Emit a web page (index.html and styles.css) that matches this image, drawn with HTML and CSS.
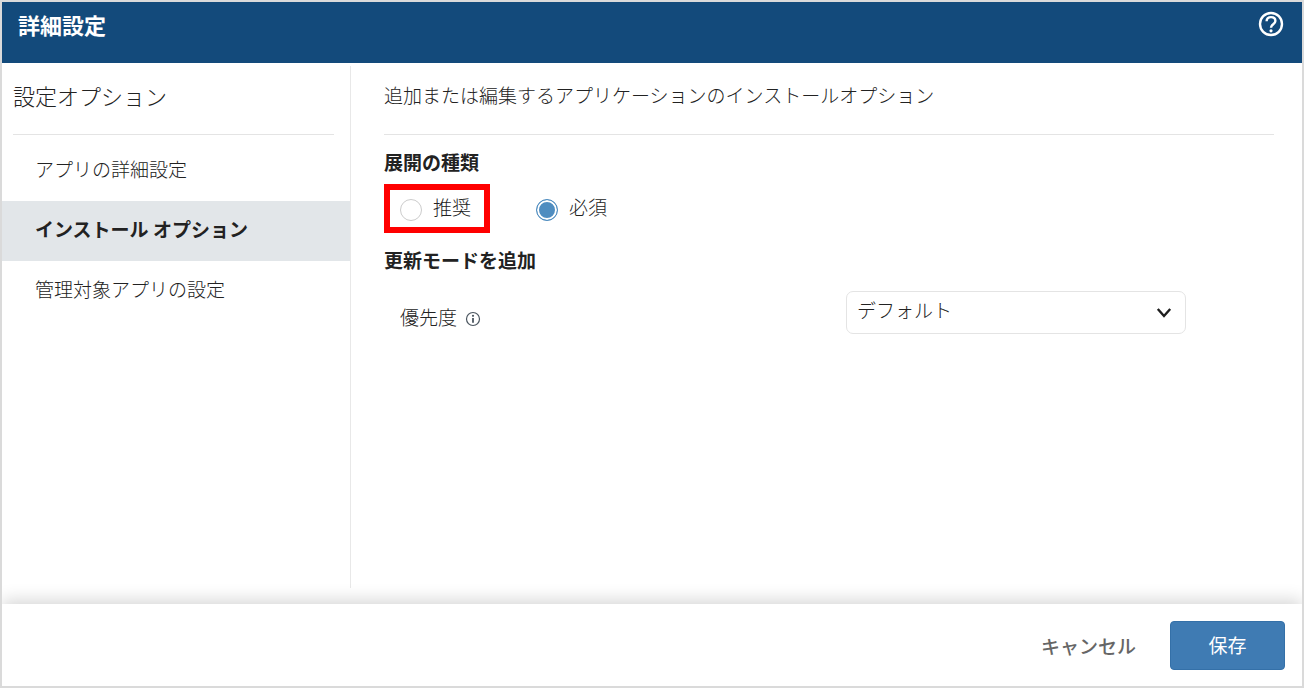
FILE: index.html
```
<!DOCTYPE html>
<html lang="ja">
<head>
  <meta charset="UTF-8">
  <meta name="viewport" content="width=device-width, initial-scale=1">
  <title>詳細設定</title>
  <link rel="stylesheet" href="styles.css">
</head>
<body>

<div class="dialog">
  <header class="dialog-header">
    <h1>詳細設定</h1>
    <button type="button" class="help" aria-label="ヘルプ">
      <svg width="26" height="26" viewBox="0 0 26 26" fill="none" stroke="#fff">
        <circle cx="13" cy="13" r="11" stroke-width="2.4"/>
        <path d="M8.6 10.2c0-2.5 1.8-4.1 4.4-4.1s4.4 1.6 4.4 3.9c0 3.2-4.4 3.4-4.4 6.8" stroke-width="2.4"/>
        <circle cx="13" cy="19.8" r="1.6" fill="#fff" stroke="none"/>
      </svg>
    </button>
  </header>

  <div class="dialog-body">
    <aside class="sidebar">
      <h2>設定オプション</h2>
      <nav>
        <ul>
          <li><a href="#details">アプリの詳細設定</a></li>
          <li><a href="#install" class="active">インストール オプション</a></li>
          <li><a href="#managed">管理対象アプリの設定</a></li>
        </ul>
      </nav>
    </aside>

    <main class="content">
      <p class="lead">追加または編集するアプリケーションのインストールオプション</p>

      <h3 id="deploy-title">展開の種類</h3>
      <div class="radios" role="radiogroup" aria-labelledby="deploy-title">
        <label class="radio highlight"><input type="radio" name="deploy"><span>推奨</span></label>
        <label class="radio"><input type="radio" name="deploy" checked><span>必須</span></label>
      </div>

      <h3>更新モードを追加</h3>
      <div class="field">
        <div class="field-label">
          <label for="priority">優先度</label>
          <svg width="16" height="16" viewBox="0 0 16 16" fill="none" stroke="#4a555f">
            <circle cx="8" cy="8" r="6.5" stroke-width="1.2"/>
            <path d="M8 7v4.8" stroke-width="1.8"/>
            <circle cx="8" cy="4.8" r="1.1" fill="#4a555f" stroke="none"/>
          </svg>
        </div>
        <div class="select">
          <select id="priority">
            <option>デフォルト</option>
          </select>
          <svg class="chevron" width="16" height="12" viewBox="0 0 16 12" fill="none" stroke="#1e1e1e" stroke-width="2.4">
            <path d="M1.8 2L8 9l6.2-7"/>
          </svg>
        </div>
      </div>
    </main>
  </div>

  <footer class="dialog-footer">
    <button type="button" class="btn-cancel">キャンセル</button>
    <button type="button" class="btn-save">保存</button>
  </footer>
</div>

</body>
</html>
```
FILE: styles.css
```
*, *:after, *:before {
  box-sizing: border-box;
}
body {
  background: #fff;
  color: #222;
  font-family: "Noto Sans CJK JP", sans-serif;
  font-size: 19px;
  font-weight: 300;
  line-height: 28px;
  margin: 0;
}
h1, h2, h3, p, ul {
  margin: 0;
  padding: 0;
}
ul {
  list-style: none;
}
button, select {
  font-family: inherit;
  font-size: inherit;
  line-height: inherit;
}
button {
  background: none;
  border: 0;
  cursor: pointer;
  padding: 0;
}
svg {
  display: block;
}

.dialog {
  border: 2px solid #dadada;
  display: flex;
  flex-direction: column;
  min-height: 100vh;
}

.dialog-header {
  align-items: flex-start;
  background: #134a7b;
  color: #fff;
  display: flex;
  justify-content: space-between;
  min-height: 61px;
  padding: 8px 18px 0 16px;
}
.dialog-header h1 {
  font-size: 22px;
  font-weight: 700;
}
.help {
  margin-top: 1px;
}

.dialog-body {
  display: flex;
  flex: 1;
  padding: 3px 0 16px;
}
.sidebar {
  border-right: 1px solid #e8e8e8;
  flex: 0 0 349px;
}
.sidebar h2 {
  border-bottom: 1px solid #e4e4e4;
  font-size: 22px;
  font-weight: 300;
  margin: 0 16px 6px 11px;
  padding: 15px 0 25px;
}
.sidebar a {
  color: inherit;
  display: block;
  padding: 14px 33px 18px;
  text-decoration: none;
}
.sidebar a.active {
  background: #e2e6e9;
  font-weight: 700;
}

.content {
  flex: 1;
  padding: 0 28px 0 33px;
}
.lead {
  border-bottom: 1px solid #e4e4e4;
  margin-bottom: 13px;
  padding: 15px 0 25px;
}
.content h3 {
  font-size: 19px;
  font-weight: 700;
}
.radios {
  display: flex;
  gap: 30px;
  margin: 8px 0 13px;
}
.radio {
  align-items: flex-start;
  border: 6px solid transparent;
  display: flex;
  gap: 11px;
  padding: 3px 13px 6px 10px;
}
.radio.highlight {
  border-color: #f00;
}
.radio input {
  -webkit-appearance: none;
  appearance: none;
  background: #fff;
  border: 1px solid #ccc;
  border-radius: 50%;
  height: 22px;
  margin: 6px 0 0;
  width: 22px;
}
.radio input:checked {
  background: #4f8dc0;
  border-color: #4f8dc0;
  box-shadow: inset 0 0 0 2px #fff;
}

.field {
  align-items: center;
  display: grid;
  grid-template-columns: 1fr 340px;
  margin-top: 17px;
  padding: 0 88px 0 16px;
}
.field-label {
  align-items: center;
  display: flex;
  gap: 8px;
  padding-top: 8px;
}
.field-label svg {
  margin-top: 4px;
}
.select {
  position: relative;
}
.select select {
  -webkit-appearance: none;
  appearance: none;
  background: #fff;
  border: 1px solid #e4e4e4;
  border-radius: 7px;
  color: inherit;
  display: block;
  font-weight: 300;
  padding: 4px 40px 9px 10px;
  width: 100%;
}
.chevron {
  pointer-events: none;
  position: absolute;
  right: 14px;
  top: 16px;
}

.dialog-footer {
  align-items: center;
  background: #fff;
  box-shadow: 0 -4px 16px rgba(0, 0, 0, .16);
  clip-path: inset(-24px 0 0 0);
  display: flex;
  gap: 34px;
  justify-content: flex-end;
  padding: 17px 17px 16px;
}
.btn-cancel {
  color: #666;
  font-weight: 500;
}
.btn-save {
  background: #3f7bb3;
  border: 1px solid #3470a8;
  border-radius: 4px;
  color: #fff;
  font-weight: 400;
  min-width: 115px;
  padding: 9px 16px 10px;
}
```
